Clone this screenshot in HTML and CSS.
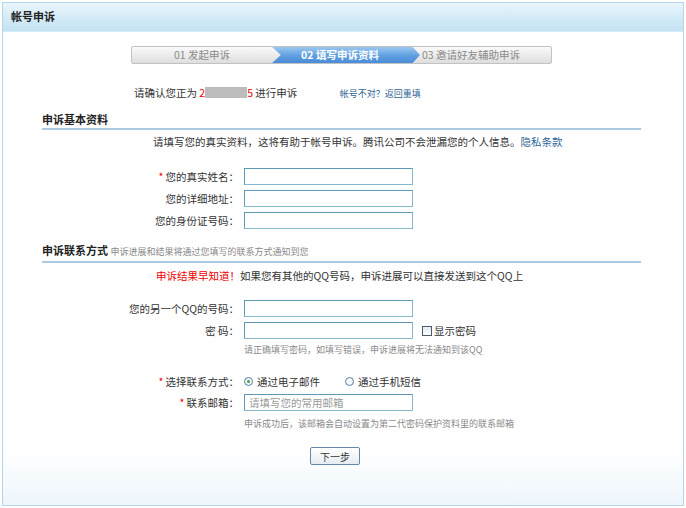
FILE: index.html
```html
<!DOCTYPE html>
<html lang="zh-CN">
<head>
    <meta charset="UTF-8">
    <title>帐号申诉</title>
    <link rel="stylesheet" href="styles.css">
</head>
<body>
    <div class="panel">
        <div class="panel-head">帐号申诉</div>
        <div class="panel-body">
            <div class="steps">
                <div class="step">01 发起申诉</div>
                <div class="step current">02 填写申诉资料</div>
                <div class="step last">03 邀请好友辅助申诉</div>
            </div>

            <div class="confirm">
                请确认您正为 <span class="red">2</span><span class="mask"></span><span class="red">5</span> 进行申诉
                <a class="back" href="#">帐号不对？返回重填</a>
            </div>

            <h2 class="sec-title">申诉基本资料</h2>
            <p class="desc">请填写您的真实资料，这将有助于帐号申诉。腾讯公司不会泄漏您的个人信息。<a href="#">隐私条款</a></p>

            <div class="row first">
                <label><span class="star">*</span>您的真实姓名：</label>
                <input type="text">
            </div>
            <div class="row">
                <label>您的详细地址：</label>
                <input type="text">
            </div>
            <div class="row">
                <label>您的身份证号码：</label>
                <input type="text">
            </div>

            <h2 class="sec-title second">申诉联系方式 <small>申诉进展和结果将通过您填写的联系方式通知到您</small></h2>
            <p class="notice"><span class="red">申诉结果早知道！</span>如果您有其他的QQ号码，申诉进展可以直接发送到这个QQ上</p>

            <div class="row qq">
                <label>您的另一个QQ的号码：</label>
                <input type="text">
            </div>
            <div class="row">
                <label>密 码：</label>
                <input type="password">
                <span class="check"><i class="box"></i>显示密码</span>
            </div>
            <div class="hint">请正确填写密码，如填写错误，申诉进展将无法通知到该QQ</div>

            <div class="row radios">
                <label><span class="star">*</span>选择联系方式：</label>
                <span class="radio on"><i></i>通过电子邮件</span>
                <span class="radio"><i></i>通过手机短信</span>
            </div>
            <div class="row mail">
                <label><span class="star">*</span>联系邮箱：</label>
                <input type="text" placeholder="请填写您的常用邮箱">
            </div>
            <div class="hint mail-hint">申诉成功后，该邮箱会自动设置为第二代密码保护资料里的联系邮箱</div>

            <div class="actions">
                <button>下一步</button>
            </div>
        </div>
    </div>
</body>
</html>
```

FILE: styles.css
```css
body {
    margin: 0;
    background: #fff;
    font-family: "Noto Sans CJK SC", "Liberation Sans", sans-serif;
    font-size: 10.5px;
    color: #333;
}

.panel {
    width: 680px;
    height: 502px;
    margin: 2px 0 0 2px;
    border: 1px solid #b7d4e8;
    display: flex;
    flex-direction: column;
}

.panel-head {
    height: 28px;
    line-height: 26px;
    padding-left: 8px;
    font-size: 11px;
    font-weight: bold;
    color: #222;
    background: linear-gradient(#e8f5fc, #c3e2f3);
    border-bottom: 1px solid #d6ebf7;
}

.panel-body {
    flex: 1;
    padding: 14px 42px 0 39px;
    background: linear-gradient(#fff 88%, #eef6fc);
}

/* 步骤条 */
.steps {
    display: flex;
    width: 419px;
    height: 16px;
    margin-left: 89px;
    border: 1px solid #c2c2c2;
    border-radius: 2px;
    background: linear-gradient(#fafafa, #dedede);
    line-height: 16px;
    color: #8a8a8a;
    font-size: 10.5px;
}

.step {
    width: 140px;
    text-align: center;
}

.step.current {
    width: 148px;
    padding-right: 12px;
    box-sizing: border-box;
    color: #fff;
    font-weight: bold;
    background: linear-gradient(#9cc8f0, #5e9ee0 55%, #4a8cd6);
    clip-path: polygon(0 0, 95% 0, 100% 50%, 95% 100%, 0 100%, 6% 50%);
}

.step.last {
    flex: 1;
    text-align: left;
    padding-left: 2px;
}

.confirm {
    margin: 22px 0 0 92px;
    line-height: 14px;
}

.red {
    color: #e00;
}

.mask {
    display: inline-block;
    width: 42px;
    height: 11px;
    vertical-align: -1px;
    background: #bcbcbc;
}

.back {
    margin-left: 40px;
    font-size: 9px;
    color: #2f6496;
    text-decoration: none;
}

.sec-title {
    margin: 10px 0 0;
    padding-bottom: 1px;
    line-height: 16px;
    font-size: 11px;
    font-weight: bold;
    color: #222;
    border-bottom: 2px solid #a9c9e5;
}

.sec-title.second {
    margin-top: 13px;
}

.sec-title small {
    font-size: 9px;
    font-weight: normal;
    color: #888;
}

.desc {
    margin: 5px 0 0 111px;
    line-height: 14px;
}

.desc a {
    color: #2f6496;
    text-decoration: none;
}

.notice {
    margin: 6px 0 0 114px;
    line-height: 14px;
}

.row {
    display: flex;
    align-items: center;
    height: 17px;
    margin-top: 5px;
}

.row.first {
    margin-top: 19px;
}

.row.qq {
    margin-top: 17px;
}

.row label {
    width: 197px;
    text-align: right;
    padding-right: 5px;
    flex-shrink: 0;
}

.star {
    color: #e00;
    margin-right: 2px;
}

.row input {
    width: 169px;
    height: 17px;
    box-sizing: border-box;
    margin: 0;
    padding: 0 4px;
    border: 1px solid #86b8cc;
    border-top-color: #5f9bb6;
    border-left-color: #5f9bb6;
    font-family: inherit;
    font-size: 10.5px;
    outline: none;
}

.row input::placeholder {
    color: #9a9a9a;
}

.check {
    display: flex;
    align-items: center;
    margin-left: 9px;
}

.check .box {
    width: 8px;
    height: 8px;
    margin-right: 2px;
    border: 1px solid #4a5a6a;
    background: linear-gradient(#e6eaee, #fff);
}

.hint {
    margin: 5px 0 0 202px;
    line-height: 12px;
    font-size: 9px;
    color: #8a8a8a;
}

.row.radios {
    margin-top: 17px;
}

.radio {
    display: flex;
    align-items: center;
    width: 101px;
}

.radio i {
    width: 7px;
    height: 7px;
    margin-right: 4px;
    border: 1px solid #5a7f9c;
    border-radius: 50%;
    background: #f4f7fa;
    position: relative;
}

.radio.on i::after {
    content: "";
    position: absolute;
    left: 2px;
    top: 2px;
    width: 3px;
    height: 3px;
    border-radius: 50%;
    background: #3aa63a;
}

.row.mail {
    margin-top: 4px;
}

.mail-hint {
    margin-top: 7px;
}

.actions {
    margin: 17px 0 0 268px;
}

.actions button {
    width: 50px;
    height: 18px;
    padding: 0;
    border: 1px solid #6687a6;
    border-radius: 2px;
    background: linear-gradient(#fff, #e6ecf2);
    font-family: inherit;
    font-size: 10px;
    color: #333;
}
```
